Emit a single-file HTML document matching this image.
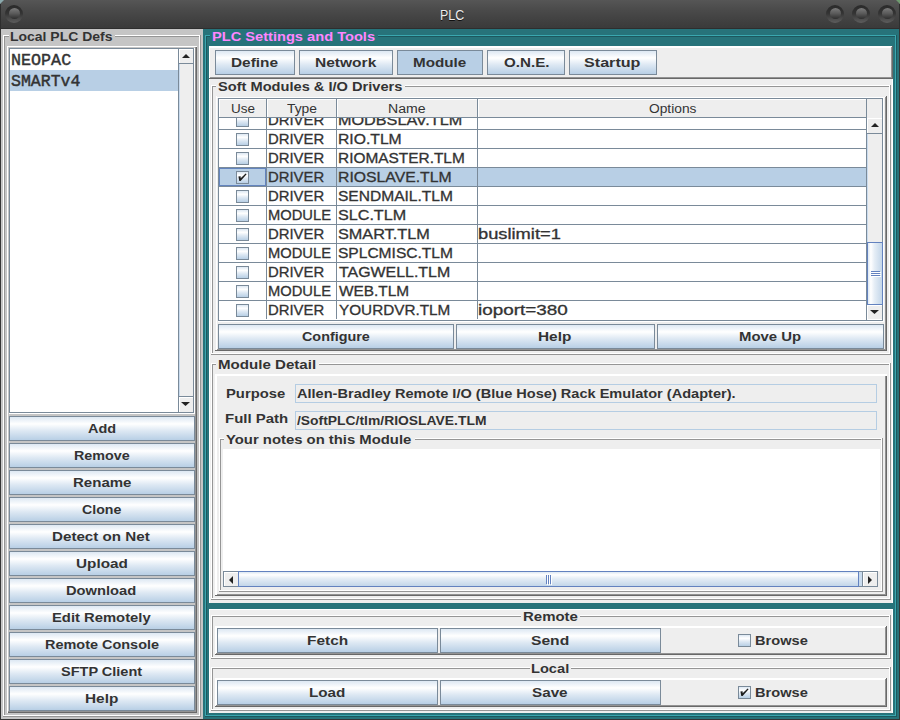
<!DOCTYPE html>
<html><head><meta charset="utf-8">
<style>
*{margin:0;padding:0;box-sizing:border-box}
html,body{width:900px;height:720px;overflow:hidden;background:#353535;font-family:"Liberation Sans",sans-serif;color:#333}
div{position:absolute}
.t{white-space:nowrap}
</style></head><body>
<div style="left:0px;top:0px;width:900px;height:29px;background:linear-gradient(#565656 0%,#4a4a4a 35%,#3e3e3e 80%,#3a3a3a 100%)"></div>
<div style="left:0px;top:28px;width:900px;height:1px;background:#2e2e2e"></div>
<div style="left:0px;top:0px;width:4px;height:4px;background:#8aa9ad;clip-path:polygon(0 0,100% 0,0 100%)"></div>
<div style="left:0px;top:4px;width:1px;height:25px;background:#2e2e2e"></div>
<div style="left:899px;top:4px;width:1px;height:25px;background:#2e2e2e"></div>
<div style="left:896px;top:0px;width:4px;height:4px;background:#6f9a6f;clip-path:polygon(0 0,100% 0,100% 100%)"></div>
<div style="left:5px;top:5px;width:18px;height:18px;border-radius:50%;background:linear-gradient(#2a2a2a,#333 45%,#5e5e5e)"></div>
<div style="left:8.5px;top:8.2px;width:11px;height:11px;border-radius:50%;background:linear-gradient(#7c7c7c,#5a5a5a 50%,#2e2e2e)"></div>
<div style="left:826px;top:5px;width:18px;height:18px;border-radius:50%;background:linear-gradient(#2a2a2a,#333 45%,#5e5e5e)"></div>
<div style="left:829.5px;top:8.2px;width:11px;height:11px;border-radius:50%;background:linear-gradient(#7c7c7c,#5a5a5a 50%,#2e2e2e)"></div>
<div style="left:852px;top:5px;width:18px;height:18px;border-radius:50%;background:linear-gradient(#2a2a2a,#333 45%,#5e5e5e)"></div>
<div style="left:855.5px;top:8.2px;width:11px;height:11px;border-radius:50%;background:linear-gradient(#7c7c7c,#5a5a5a 50%,#2e2e2e)"></div>
<div style="left:878px;top:5px;width:18px;height:18px;border-radius:50%;background:linear-gradient(#2a2a2a,#333 45%,#5e5e5e)"></div>
<div style="left:881.5px;top:8.2px;width:11px;height:11px;border-radius:50%;background:linear-gradient(#7c7c7c,#5a5a5a 50%,#2e2e2e)"></div>
<div style="left:1px;top:29px;width:202px;height:690px;background:#c5c5c5"></div>
<div style="left:3px;top:35px;width:197px;height:1px;background:#ffffff"></div>
<div style="left:3px;top:35px;width:1px;height:681px;background:#ffffff"></div>
<div style="left:199px;top:35px;width:1px;height:681px;background:#ffffff"></div>
<div style="left:3px;top:715px;width:197px;height:1px;background:#ffffff"></div>
<div style="left:4px;top:36px;width:1px;height:679px;background:#959595"></div>
<div style="left:4px;top:36px;width:195px;height:1px;background:#959595"></div>
<div style="left:3px;top:716px;width:198px;height:1px;background:#959595"></div>
<div style="left:200px;top:35px;width:1px;height:682px;background:#959595"></div>
<div style="left:9px;top:30px;width:106px;height:12px;background:#c5c5c5"></div>
<div style="left:195px;top:47px;width:1px;height:665px;background:#939393"></div>
<div style="left:8px;top:711px;width:188px;height:1px;background:#939393"></div>
<div style="left:196px;top:46px;width:1px;height:667px;background:#686868"></div>
<div style="left:7px;top:712px;width:190px;height:1px;background:#686868"></div>
<div style="left:7px;top:46px;width:1px;height:667px;background:#ffffff"></div>
<div style="left:7px;top:46px;width:190px;height:1px;background:#ffffff"></div>
<div style="left:9px;top:48px;width:185px;height:365px;border:1px solid #7a8a99;background:#fff"></div>
<div style="left:9px;top:413px;width:186px;height:1px;background:#ffffff"></div>
<div style="left:194px;top:48px;width:1px;height:366px;background:#ffffff"></div>
<div style="left:10px;top:70px;width:168px;height:21px;background:#b8cfe5"></div>
<div style="left:178px;top:49px;width:1px;height:363px;background:#7a8a99"></div>
<div style="left:179px;top:49px;width:14px;height:363px;background:#eeeeee"></div>
<div style="left:179px;top:64px;width:1px;height:332px;background:#c9dbee"></div>
<div style="left:179px;top:49px;width:14px;height:15px;background:#eeeeee;border-top:1px solid #fff;border-left:1px solid #fff"></div>
<div style="left:179px;top:63px;width:14px;height:1px;background:#7a8a99"></div>
<svg style="position:absolute;left:182px;top:54px" width="8" height="4"><polygon points="0,4 4.0,0 8,4" fill="#222"/></svg>
<div style="left:179px;top:396px;width:14px;height:1px;background:#7a8a99"></div>
<div style="left:179px;top:397px;width:14px;height:15px;background:#eeeeee;border-top:1px solid #fff;border-left:1px solid #fff"></div>
<svg style="position:absolute;left:181px;top:402px" width="9" height="4"><polygon points="0,0 9,0 4.5,4" fill="#222"/></svg>
<div style="left:178px;top:412px;width:16px;height:1px;background:#7a8a99"></div>
<div style="left:9px;top:416px;width:186px;height:25px;border:1px solid #7a8a99;background:linear-gradient(180deg,#dde8f3 0%,#ffffff 30%,#dde8f3 60%,#b8cfe5 100%)"></div>
<div style="left:9px;top:443px;width:186px;height:25px;border:1px solid #7a8a99;background:linear-gradient(180deg,#dde8f3 0%,#ffffff 30%,#dde8f3 60%,#b8cfe5 100%)"></div>
<div style="left:9px;top:470px;width:186px;height:25px;border:1px solid #7a8a99;background:linear-gradient(180deg,#dde8f3 0%,#ffffff 30%,#dde8f3 60%,#b8cfe5 100%)"></div>
<div style="left:9px;top:497px;width:186px;height:25px;border:1px solid #7a8a99;background:linear-gradient(180deg,#dde8f3 0%,#ffffff 30%,#dde8f3 60%,#b8cfe5 100%)"></div>
<div style="left:9px;top:524px;width:186px;height:25px;border:1px solid #7a8a99;background:linear-gradient(180deg,#dde8f3 0%,#ffffff 30%,#dde8f3 60%,#b8cfe5 100%)"></div>
<div style="left:9px;top:551px;width:186px;height:25px;border:1px solid #7a8a99;background:linear-gradient(180deg,#dde8f3 0%,#ffffff 30%,#dde8f3 60%,#b8cfe5 100%)"></div>
<div style="left:9px;top:578px;width:186px;height:25px;border:1px solid #7a8a99;background:linear-gradient(180deg,#dde8f3 0%,#ffffff 30%,#dde8f3 60%,#b8cfe5 100%)"></div>
<div style="left:9px;top:605px;width:186px;height:25px;border:1px solid #7a8a99;background:linear-gradient(180deg,#dde8f3 0%,#ffffff 30%,#dde8f3 60%,#b8cfe5 100%)"></div>
<div style="left:9px;top:632px;width:186px;height:25px;border:1px solid #7a8a99;background:linear-gradient(180deg,#dde8f3 0%,#ffffff 30%,#dde8f3 60%,#b8cfe5 100%)"></div>
<div style="left:9px;top:659px;width:186px;height:25px;border:1px solid #7a8a99;background:linear-gradient(180deg,#dde8f3 0%,#ffffff 30%,#dde8f3 60%,#b8cfe5 100%)"></div>
<div style="left:9px;top:686px;width:186px;height:25px;border:1px solid #7a8a99;background:linear-gradient(180deg,#dde8f3 0%,#ffffff 30%,#dde8f3 60%,#b8cfe5 100%)"></div>
<div style="left:203px;top:29px;width:696px;height:690px;background:#27737a"></div>
<div style="left:205px;top:35px;width:691px;height:1px;background:#3aa7af"></div>
<div style="left:205px;top:35px;width:1px;height:681px;background:#3aa7af"></div>
<div style="left:895px;top:35px;width:1px;height:681px;background:#3aa7af"></div>
<div style="left:205px;top:715px;width:691px;height:1px;background:#3aa7af"></div>
<div style="left:206px;top:36px;width:1px;height:679px;background:#1c585e"></div>
<div style="left:206px;top:36px;width:689px;height:1px;background:#1c585e"></div>
<div style="left:205px;top:716px;width:692px;height:1px;background:#1c585e"></div>
<div style="left:896px;top:35px;width:1px;height:682px;background:#1c585e"></div>
<div style="left:210px;top:30px;width:168px;height:13px;background:#27737a"></div>
<div style="left:209px;top:46px;width:684px;height:557px;background:#eeeeee"></div>
<div style="left:209px;top:46px;width:1px;height:557px;background:#ffffff"></div>
<div style="left:209px;top:46px;width:684px;height:1px;background:#ffffff"></div>
<div style="left:892px;top:46px;width:1px;height:557px;background:#ffffff"></div>
<div style="left:209px;top:47px;width:684px;height:1px;background:#ffffff"></div>
<div style="left:891px;top:47px;width:1px;height:31px;background:#939393"></div>
<div style="left:210px;top:77px;width:682px;height:1px;background:#939393"></div>
<div style="left:892px;top:46px;width:1px;height:33px;background:#686868"></div>
<div style="left:209px;top:78px;width:684px;height:1px;background:#686868"></div>
<div style="left:215px;top:50px;width:80px;height:25px;border:1px solid #7a8a99;background:linear-gradient(180deg,#dde8f3 0%,#ffffff 30%,#dde8f3 60%,#b8cfe5 100%)"></div>
<div style="left:299px;top:50px;width:94px;height:25px;border:1px solid #7a8a99;background:linear-gradient(180deg,#dde8f3 0%,#ffffff 30%,#dde8f3 60%,#b8cfe5 100%)"></div>
<div style="left:397px;top:50px;width:86px;height:25px;border:1px solid #7a8a99;background:#b8cfe5"></div>
<div style="left:487px;top:50px;width:78px;height:25px;border:1px solid #7a8a99;background:linear-gradient(180deg,#dde8f3 0%,#ffffff 30%,#dde8f3 60%,#b8cfe5 100%)"></div>
<div style="left:569px;top:50px;width:88px;height:25px;border:1px solid #7a8a99;background:linear-gradient(180deg,#dde8f3 0%,#ffffff 30%,#dde8f3 60%,#b8cfe5 100%)"></div>
<div style="left:211px;top:85px;width:679px;height:1px;background:#ffffff"></div>
<div style="left:211px;top:85px;width:1px;height:269px;background:#ffffff"></div>
<div style="left:889px;top:85px;width:1px;height:269px;background:#ffffff"></div>
<div style="left:211px;top:353px;width:679px;height:1px;background:#ffffff"></div>
<div style="left:212px;top:86px;width:1px;height:267px;background:#959595"></div>
<div style="left:212px;top:86px;width:677px;height:1px;background:#959595"></div>
<div style="left:211px;top:354px;width:680px;height:1px;background:#959595"></div>
<div style="left:890px;top:85px;width:1px;height:270px;background:#959595"></div>
<div style="left:216px;top:80px;width:189px;height:12px;background:#eeeeee"></div>
<div style="left:885px;top:97px;width:1px;height:253px;background:#939393"></div>
<div style="left:216px;top:349px;width:670px;height:1px;background:#939393"></div>
<div style="left:886px;top:96px;width:1px;height:255px;background:#686868"></div>
<div style="left:215px;top:350px;width:672px;height:1px;background:#686868"></div>
<div style="left:216px;top:96px;width:1px;height:254px;background:#ffffff"></div>
<div style="left:216px;top:97px;width:669px;height:1px;background:#ffffff"></div>
<div style="left:218px;top:98px;width:665px;height:223px;border:1px solid #7a8a99;background:#fff"></div>
<div style="left:218px;top:321px;width:666px;height:1px;background:#ffffff"></div>
<div style="left:883px;top:98px;width:1px;height:224px;background:#ffffff"></div>
<div style="left:219px;top:99px;width:648px;height:18px;background:#eeeeee"></div>
<div style="left:219px;top:117px;width:648px;height:1px;background:#7a8a99"></div>
<div style="left:219px;top:99px;width:648px;height:1px;background:#ffffff"></div>
<div style="left:266px;top:99px;width:1px;height:18px;background:#7a8a99"></div>
<div style="left:267px;top:99px;width:1px;height:18px;background:#ffffff"></div>
<div style="left:336px;top:99px;width:1px;height:18px;background:#7a8a99"></div>
<div style="left:337px;top:99px;width:1px;height:18px;background:#ffffff"></div>
<div style="left:477px;top:99px;width:1px;height:18px;background:#7a8a99"></div>
<div style="left:478px;top:99px;width:1px;height:18px;background:#ffffff"></div>
<div style="left:219px;top:99px;width:1px;height:18px;background:#ffffff"></div>
<div style="left:867px;top:99px;width:15px;height:19px;background:#eeeeee"></div>
<div style="left:866px;top:99px;width:1px;height:221px;background:#7a8a99"></div>
<div style="left:219px;top:118px;width:647px;height:201px;overflow:hidden">
<div style="left:0;top:11px;width:647px;height:1px;background:#7a8a99"></div>
<div style="left:47px;top:-8px;width:1px;height:20px;background:#7a8a99"></div>
<div style="left:117px;top:-8px;width:1px;height:20px;background:#7a8a99"></div>
<div style="left:258px;top:-8px;width:1px;height:20px;background:#7a8a99"></div>
<div style="left:17px;top:-4px;width:13px;height:13px;border:1px solid #7a8a99;background:linear-gradient(#dde8f3 0%,#ffffff 30%,#dde8f3 60%,#b8cfe5 100%)"></div>
<div style="left:0;top:30px;width:647px;height:1px;background:#7a8a99"></div>
<div style="left:47px;top:11px;width:1px;height:20px;background:#7a8a99"></div>
<div style="left:117px;top:11px;width:1px;height:20px;background:#7a8a99"></div>
<div style="left:258px;top:11px;width:1px;height:20px;background:#7a8a99"></div>
<div style="left:17px;top:15px;width:13px;height:13px;border:1px solid #7a8a99;background:linear-gradient(#dde8f3 0%,#ffffff 30%,#dde8f3 60%,#b8cfe5 100%)"></div>
<div style="left:0;top:49px;width:647px;height:1px;background:#7a8a99"></div>
<div style="left:47px;top:30px;width:1px;height:20px;background:#7a8a99"></div>
<div style="left:117px;top:30px;width:1px;height:20px;background:#7a8a99"></div>
<div style="left:258px;top:30px;width:1px;height:20px;background:#7a8a99"></div>
<div style="left:17px;top:34px;width:13px;height:13px;border:1px solid #7a8a99;background:linear-gradient(#dde8f3 0%,#ffffff 30%,#dde8f3 60%,#b8cfe5 100%)"></div>
<div style="left:0;top:50px;width:647px;height:18px;background:#b8cfe5"></div>
<div style="left:0;top:68px;width:647px;height:1px;background:#7a8a99"></div>
<div style="left:47px;top:49px;width:1px;height:20px;background:#7a8a99"></div>
<div style="left:117px;top:49px;width:1px;height:20px;background:#7a8a99"></div>
<div style="left:258px;top:49px;width:1px;height:20px;background:#7a8a99"></div>
<div style="left:17px;top:53px;width:13px;height:13px;border:1px solid #7a8a99;background:linear-gradient(#dde8f3 0%,#ffffff 30%,#dde8f3 60%,#b8cfe5 100%)"></div>
<div style="left:0;top:50px;width:47px;height:18px;border:1px solid #6384be"></div>
<svg style="position:absolute;left:17px;top:53px" width="13" height="13" viewBox="0 0 13 13"><polygon points="2.4,5.4 4.6,5.2 4.7,7.2 9.6,2.4 10.6,3.3 4.6,9.9 3.3,9.9" fill="#1e1e1e"/></svg>
<div style="left:0;top:87px;width:647px;height:1px;background:#7a8a99"></div>
<div style="left:47px;top:68px;width:1px;height:20px;background:#7a8a99"></div>
<div style="left:117px;top:68px;width:1px;height:20px;background:#7a8a99"></div>
<div style="left:258px;top:68px;width:1px;height:20px;background:#7a8a99"></div>
<div style="left:17px;top:72px;width:13px;height:13px;border:1px solid #7a8a99;background:linear-gradient(#dde8f3 0%,#ffffff 30%,#dde8f3 60%,#b8cfe5 100%)"></div>
<div style="left:0;top:106px;width:647px;height:1px;background:#7a8a99"></div>
<div style="left:47px;top:87px;width:1px;height:20px;background:#7a8a99"></div>
<div style="left:117px;top:87px;width:1px;height:20px;background:#7a8a99"></div>
<div style="left:258px;top:87px;width:1px;height:20px;background:#7a8a99"></div>
<div style="left:17px;top:91px;width:13px;height:13px;border:1px solid #7a8a99;background:linear-gradient(#dde8f3 0%,#ffffff 30%,#dde8f3 60%,#b8cfe5 100%)"></div>
<div style="left:0;top:125px;width:647px;height:1px;background:#7a8a99"></div>
<div style="left:47px;top:106px;width:1px;height:20px;background:#7a8a99"></div>
<div style="left:117px;top:106px;width:1px;height:20px;background:#7a8a99"></div>
<div style="left:258px;top:106px;width:1px;height:20px;background:#7a8a99"></div>
<div style="left:17px;top:110px;width:13px;height:13px;border:1px solid #7a8a99;background:linear-gradient(#dde8f3 0%,#ffffff 30%,#dde8f3 60%,#b8cfe5 100%)"></div>
<div style="left:0;top:144px;width:647px;height:1px;background:#7a8a99"></div>
<div style="left:47px;top:125px;width:1px;height:20px;background:#7a8a99"></div>
<div style="left:117px;top:125px;width:1px;height:20px;background:#7a8a99"></div>
<div style="left:258px;top:125px;width:1px;height:20px;background:#7a8a99"></div>
<div style="left:17px;top:129px;width:13px;height:13px;border:1px solid #7a8a99;background:linear-gradient(#dde8f3 0%,#ffffff 30%,#dde8f3 60%,#b8cfe5 100%)"></div>
<div style="left:0;top:163px;width:647px;height:1px;background:#7a8a99"></div>
<div style="left:47px;top:144px;width:1px;height:20px;background:#7a8a99"></div>
<div style="left:117px;top:144px;width:1px;height:20px;background:#7a8a99"></div>
<div style="left:258px;top:144px;width:1px;height:20px;background:#7a8a99"></div>
<div style="left:17px;top:148px;width:13px;height:13px;border:1px solid #7a8a99;background:linear-gradient(#dde8f3 0%,#ffffff 30%,#dde8f3 60%,#b8cfe5 100%)"></div>
<div style="left:0;top:182px;width:647px;height:1px;background:#7a8a99"></div>
<div style="left:47px;top:163px;width:1px;height:20px;background:#7a8a99"></div>
<div style="left:117px;top:163px;width:1px;height:20px;background:#7a8a99"></div>
<div style="left:258px;top:163px;width:1px;height:20px;background:#7a8a99"></div>
<div style="left:17px;top:167px;width:13px;height:13px;border:1px solid #7a8a99;background:linear-gradient(#dde8f3 0%,#ffffff 30%,#dde8f3 60%,#b8cfe5 100%)"></div>
<div style="left:0;top:201px;width:647px;height:1px;background:#7a8a99"></div>
<div style="left:47px;top:182px;width:1px;height:20px;background:#7a8a99"></div>
<div style="left:117px;top:182px;width:1px;height:20px;background:#7a8a99"></div>
<div style="left:258px;top:182px;width:1px;height:20px;background:#7a8a99"></div>
<div style="left:17px;top:186px;width:13px;height:13px;border:1px solid #7a8a99;background:linear-gradient(#dde8f3 0%,#ffffff 30%,#dde8f3 60%,#b8cfe5 100%)"></div>
<div class="t" style="left:48.94px;top:-5px;font-family:'Liberation Sans';font-weight:normal;font-size:14px;line-height:14px;transform:scaleX(1.0627);transform-origin:0 0;color:#333;-webkit-text-stroke:0.3px #333;">DRIVER</div>
<div class="t" style="left:118.84px;top:-5px;font-family:'Liberation Sans';font-weight:normal;font-size:14px;line-height:14px;transform:scaleX(1.1575);transform-origin:0 0;color:#333;-webkit-text-stroke:0.3px #333;">MODBSLAV.TLM</div>
<div class="t" style="left:48.94px;top:14px;font-family:'Liberation Sans';font-weight:normal;font-size:14px;line-height:14px;transform:scaleX(1.0627);transform-origin:0 0;color:#333;-webkit-text-stroke:0.3px #333;">DRIVER</div>
<div class="t" style="left:118.88px;top:14px;font-family:'Liberation Sans';font-weight:normal;font-size:14px;line-height:14px;transform:scaleX(1.1218);transform-origin:0 0;color:#333;-webkit-text-stroke:0.3px #333;">RIO.TLM</div>
<div class="t" style="left:48.94px;top:33px;font-family:'Liberation Sans';font-weight:normal;font-size:14px;line-height:14px;transform:scaleX(1.0627);transform-origin:0 0;color:#333;-webkit-text-stroke:0.3px #333;">DRIVER</div>
<div class="t" style="left:118.90px;top:33px;font-family:'Liberation Sans';font-weight:normal;font-size:14px;line-height:14px;transform:scaleX(1.1009);transform-origin:0 0;color:#333;-webkit-text-stroke:0.3px #333;">RIOMASTER.TLM</div>
<div class="t" style="left:48.94px;top:52px;font-family:'Liberation Sans';font-weight:normal;font-size:14px;line-height:14px;transform:scaleX(1.0627);transform-origin:0 0;color:#333;-webkit-text-stroke:0.3px #333;">DRIVER</div>
<div class="t" style="left:118.87px;top:52px;font-family:'Liberation Sans';font-weight:normal;font-size:14px;line-height:14px;transform:scaleX(1.1263);transform-origin:0 0;color:#333;-webkit-text-stroke:0.3px #333;">RIOSLAVE.TLM</div>
<div class="t" style="left:48.94px;top:71px;font-family:'Liberation Sans';font-weight:normal;font-size:14px;line-height:14px;transform:scaleX(1.0627);transform-origin:0 0;color:#333;-webkit-text-stroke:0.3px #333;">DRIVER</div>
<div class="t" style="left:118.89px;top:71px;font-family:'Liberation Sans';font-weight:normal;font-size:14px;line-height:14px;transform:scaleX(1.1108);transform-origin:0 0;color:#333;-webkit-text-stroke:0.3px #333;">SENDMAIL.TLM</div>
<div class="t" style="left:48.95px;top:90px;font-family:'Liberation Sans';font-weight:normal;font-size:14px;line-height:14px;transform:scaleX(1.0517);transform-origin:0 0;color:#333;-webkit-text-stroke:0.3px #333;">MODULE</div>
<div class="t" style="left:118.85px;top:90px;font-family:'Liberation Sans';font-weight:normal;font-size:14px;line-height:14px;transform:scaleX(1.1526);transform-origin:0 0;color:#333;-webkit-text-stroke:0.3px #333;">SLC.TLM</div>
<div class="t" style="left:48.94px;top:109px;font-family:'Liberation Sans';font-weight:normal;font-size:14px;line-height:14px;transform:scaleX(1.0627);transform-origin:0 0;color:#333;-webkit-text-stroke:0.3px #333;">DRIVER</div>
<div class="t" style="left:118.84px;top:109px;font-family:'Liberation Sans';font-weight:normal;font-size:14px;line-height:14px;transform:scaleX(1.1597);transform-origin:0 0;color:#333;-webkit-text-stroke:0.3px #333;">SMART.TLM</div>
<div class="t" style="left:258.69px;top:109px;font-family:'Liberation Sans';font-weight:normal;font-size:14px;line-height:14px;transform:scaleX(1.3065);transform-origin:0 0;color:#333;-webkit-text-stroke:0.3px #333;">buslimit=1</div>
<div class="t" style="left:48.95px;top:128px;font-family:'Liberation Sans';font-weight:normal;font-size:14px;line-height:14px;transform:scaleX(1.0517);transform-origin:0 0;color:#333;-webkit-text-stroke:0.3px #333;">MODULE</div>
<div class="t" style="left:118.89px;top:128px;font-family:'Liberation Sans';font-weight:normal;font-size:14px;line-height:14px;transform:scaleX(1.1108);transform-origin:0 0;color:#333;-webkit-text-stroke:0.3px #333;">SPLCMISC.TLM</div>
<div class="t" style="left:48.94px;top:147px;font-family:'Liberation Sans';font-weight:normal;font-size:14px;line-height:14px;transform:scaleX(1.0627);transform-origin:0 0;color:#333;-webkit-text-stroke:0.3px #333;">DRIVER</div>
<div class="t" style="left:120.00px;top:147px;font-family:'Liberation Sans';font-weight:normal;font-size:14px;line-height:14px;transform:scaleX(1.1371);transform-origin:0 0;color:#333;-webkit-text-stroke:0.3px #333;">TAGWELL.TLM</div>
<div class="t" style="left:48.95px;top:166px;font-family:'Liberation Sans';font-weight:normal;font-size:14px;line-height:14px;transform:scaleX(1.0517);transform-origin:0 0;color:#333;-webkit-text-stroke:0.3px #333;">MODULE</div>
<div class="t" style="left:120.00px;top:166px;font-family:'Liberation Sans';font-weight:normal;font-size:14px;line-height:14px;transform:scaleX(1.1000);transform-origin:0 0;color:#333;-webkit-text-stroke:0.3px #333;">WEB.TLM</div>
<div class="t" style="left:48.94px;top:185px;font-family:'Liberation Sans';font-weight:normal;font-size:14px;line-height:14px;transform:scaleX(1.0627);transform-origin:0 0;color:#333;-webkit-text-stroke:0.3px #333;">DRIVER</div>
<div class="t" style="left:120.00px;top:185px;font-family:'Liberation Sans';font-weight:normal;font-size:14px;line-height:14px;transform:scaleX(1.0921);transform-origin:0 0;color:#333;-webkit-text-stroke:0.3px #333;">YOURDVR.TLM</div>
<div class="t" style="left:258.65px;top:185px;font-family:'Liberation Sans';font-weight:normal;font-size:14px;line-height:14px;transform:scaleX(1.3492);transform-origin:0 0;color:#333;-webkit-text-stroke:0.3px #333;">ioport=380</div>
</div>
<div style="left:867px;top:118px;width:15px;height:201px;background:#eeeeee"></div>
<div style="left:867px;top:134px;width:1px;height:108px;background:#c9dbee"></div>
<div style="left:867px;top:118px;width:15px;height:15px;background:#eeeeee;border-top:1px solid #fff;border-left:1px solid #fff"></div>
<div style="left:867px;top:133px;width:15px;height:1px;background:#7a8a99"></div>
<svg style="position:absolute;left:871px;top:123px" width="8" height="4"><polygon points="0,4 4.0,0 8,4" fill="#222"/></svg>
<div style="left:867px;top:242px;width:16px;height:63px;border:1px solid #6382bf;background:linear-gradient(90deg,#dde8f3 0%,#ffffff 20%,#e6eef6 45%,#c3d6e9 100%)"></div>
<div style="left:871px;top:271px;width:9px;height:1px;background:#6382bf"></div>
<div style="left:872px;top:272px;width:9px;height:1px;background:#ffffff"></div>
<div style="left:871px;top:273px;width:9px;height:1px;background:#6382bf"></div>
<div style="left:872px;top:274px;width:9px;height:1px;background:#ffffff"></div>
<div style="left:871px;top:275px;width:9px;height:1px;background:#6382bf"></div>
<div style="left:872px;top:276px;width:9px;height:1px;background:#ffffff"></div>
<div style="left:867px;top:305px;width:15px;height:14px;background:#eeeeee;border-top:1px solid #fff;border-left:1px solid #fff"></div>
<svg style="position:absolute;left:870px;top:310px" width="9" height="4"><polygon points="0,0 9,0 4.5,4" fill="#222"/></svg>
<div style="left:218px;top:320px;width:665px;height:1px;background:#7a8a99"></div>
<div style="left:218px;top:324px;width:236px;height:25px;border:1px solid #7a8a99;background:linear-gradient(180deg,#dde8f3 0%,#ffffff 30%,#dde8f3 60%,#b8cfe5 100%)"></div>
<div style="left:456px;top:324px;width:199px;height:25px;border:1px solid #7a8a99;background:linear-gradient(180deg,#dde8f3 0%,#ffffff 30%,#dde8f3 60%,#b8cfe5 100%)"></div>
<div style="left:657px;top:324px;width:227px;height:25px;border:1px solid #7a8a99;background:linear-gradient(180deg,#dde8f3 0%,#ffffff 30%,#dde8f3 60%,#b8cfe5 100%)"></div>
<div style="left:211px;top:363px;width:679px;height:1px;background:#ffffff"></div>
<div style="left:211px;top:363px;width:1px;height:236px;background:#ffffff"></div>
<div style="left:889px;top:363px;width:1px;height:236px;background:#ffffff"></div>
<div style="left:211px;top:598px;width:679px;height:1px;background:#ffffff"></div>
<div style="left:212px;top:364px;width:1px;height:234px;background:#959595"></div>
<div style="left:212px;top:364px;width:677px;height:1px;background:#959595"></div>
<div style="left:211px;top:599px;width:680px;height:1px;background:#959595"></div>
<div style="left:890px;top:363px;width:1px;height:237px;background:#959595"></div>
<div style="left:216px;top:358px;width:103px;height:12px;background:#eeeeee"></div>
<div style="left:885px;top:375px;width:1px;height:220px;background:#939393"></div>
<div style="left:216px;top:594px;width:670px;height:1px;background:#939393"></div>
<div style="left:886px;top:374px;width:1px;height:222px;background:#686868"></div>
<div style="left:215px;top:595px;width:672px;height:1px;background:#686868"></div>
<div style="left:215px;top:375px;width:1px;height:220px;background:#ffffff"></div>
<div style="left:216px;top:375px;width:1px;height:220px;background:#ffffff"></div>
<div style="left:215px;top:375px;width:672px;height:1px;background:#ffffff"></div>
<div style="left:215px;top:374px;width:672px;height:1px;background:#ffffff"></div>
<div style="left:295px;top:384px;width:582px;height:19px;border:1px solid #b5cde3;background:#eeeeee"></div>
<div style="left:295px;top:411px;width:582px;height:19px;border:1px solid #b5cde3;background:#eeeeee"></div>
<div style="left:219px;top:438px;width:663px;height:1px;background:#ffffff"></div>
<div style="left:219px;top:438px;width:1px;height:153px;background:#ffffff"></div>
<div style="left:881px;top:438px;width:1px;height:153px;background:#ffffff"></div>
<div style="left:219px;top:590px;width:663px;height:1px;background:#ffffff"></div>
<div style="left:220px;top:439px;width:1px;height:151px;background:#959595"></div>
<div style="left:220px;top:439px;width:661px;height:1px;background:#959595"></div>
<div style="left:219px;top:591px;width:664px;height:1px;background:#959595"></div>
<div style="left:882px;top:438px;width:1px;height:154px;background:#959595"></div>
<div style="left:224px;top:432px;width:191px;height:12px;background:#eeeeee"></div>
<div style="left:223px;top:449px;width:657px;height:122px;background:#fff"></div>
<div style="left:223px;top:571px;width:655px;height:1px;background:#7a8a99"></div>
<div style="left:223px;top:586px;width:655px;height:1px;background:#7a8a99"></div>
<div style="left:223px;top:571px;width:1px;height:16px;background:#7a8a99"></div>
<div style="left:877px;top:571px;width:1px;height:16px;background:#7a8a99"></div>
<div style="left:224px;top:572px;width:14px;height:14px;background:#eeeeee;border-top:1px solid #fff;border-left:1px solid #fff"></div>
<div style="left:238px;top:572px;width:1px;height:14px;background:#7a8a99"></div>
<svg style="position:absolute;left:229px;top:576px" width="4" height="8"><polygon points="4,0 4,8 0,4.0" fill="#222"/></svg>
<div style="left:238px;top:571px;width:621px;height:16px;border:1px solid #6382bf;background:linear-gradient(180deg,#dde8f3 0%,#ffffff 20%,#e6eef6 45%,#c3d6e9 100%)"></div>
<div style="left:859px;top:572px;width:3px;height:14px;background:#c9dbee"></div>
<div style="left:546px;top:575px;width:1px;height:9px;background:#6382bf"></div>
<div style="left:547px;top:576px;width:1px;height:9px;background:#ffffff"></div>
<div style="left:548px;top:575px;width:1px;height:9px;background:#6382bf"></div>
<div style="left:549px;top:576px;width:1px;height:9px;background:#ffffff"></div>
<div style="left:550px;top:575px;width:1px;height:9px;background:#6382bf"></div>
<div style="left:551px;top:576px;width:1px;height:9px;background:#ffffff"></div>
<div style="left:862px;top:572px;width:1px;height:14px;background:#7a8a99"></div>
<div style="left:863px;top:572px;width:14px;height:14px;background:#eeeeee;border-top:1px solid #fff;border-left:1px solid #fff"></div>
<svg style="position:absolute;left:868px;top:576px" width="4" height="8"><polygon points="0,0 0,8 4,4.0" fill="#222"/></svg>
<div style="left:209px;top:609px;width:684px;height:104px;background:#eeeeee"></div>
<div style="left:209px;top:609px;width:1px;height:104px;background:#ffffff"></div>
<div style="left:209px;top:609px;width:684px;height:1px;background:#ffffff"></div>
<div style="left:892px;top:609px;width:1px;height:104px;background:#ffffff"></div>
<div style="left:211px;top:615px;width:679px;height:1px;background:#ffffff"></div>
<div style="left:211px;top:615px;width:1px;height:43px;background:#ffffff"></div>
<div style="left:889px;top:615px;width:1px;height:43px;background:#ffffff"></div>
<div style="left:211px;top:657px;width:679px;height:1px;background:#ffffff"></div>
<div style="left:212px;top:616px;width:1px;height:41px;background:#959595"></div>
<div style="left:212px;top:616px;width:677px;height:1px;background:#959595"></div>
<div style="left:211px;top:658px;width:680px;height:1px;background:#959595"></div>
<div style="left:890px;top:615px;width:1px;height:44px;background:#959595"></div>
<div style="left:521px;top:610px;width:59px;height:12px;background:#eeeeee"></div>
<div style="left:215px;top:626px;width:672px;height:1px;background:#ffffff"></div>
<div style="left:215px;top:627px;width:672px;height:1px;background:#ffffff"></div>
<div style="left:215px;top:626px;width:1px;height:28px;background:#ffffff"></div>
<div style="left:216px;top:626px;width:1px;height:28px;background:#ffffff"></div>
<div style="left:885px;top:627px;width:1px;height:27px;background:#939393"></div>
<div style="left:216px;top:653px;width:670px;height:1px;background:#939393"></div>
<div style="left:886px;top:626px;width:1px;height:29px;background:#686868"></div>
<div style="left:215px;top:654px;width:672px;height:1px;background:#686868"></div>
<div style="left:217px;top:628px;width:221px;height:25px;border:1px solid #7a8a99;background:linear-gradient(180deg,#dde8f3 0%,#ffffff 30%,#dde8f3 60%,#b8cfe5 100%)"></div>
<div style="left:440px;top:628px;width:221px;height:25px;border:1px solid #7a8a99;background:linear-gradient(180deg,#dde8f3 0%,#ffffff 30%,#dde8f3 60%,#b8cfe5 100%)"></div>
<div style="left:738px;top:634px;width:13px;height:13px;border:1px solid #7a8a99;background:linear-gradient(#dde8f3 0%,#ffffff 30%,#dde8f3 60%,#b8cfe5 100%)"></div>
<div style="left:211px;top:667px;width:679px;height:1px;background:#ffffff"></div>
<div style="left:211px;top:667px;width:1px;height:43px;background:#ffffff"></div>
<div style="left:889px;top:667px;width:1px;height:43px;background:#ffffff"></div>
<div style="left:211px;top:709px;width:679px;height:1px;background:#ffffff"></div>
<div style="left:212px;top:668px;width:1px;height:41px;background:#959595"></div>
<div style="left:212px;top:668px;width:677px;height:1px;background:#959595"></div>
<div style="left:211px;top:710px;width:680px;height:1px;background:#959595"></div>
<div style="left:890px;top:667px;width:1px;height:44px;background:#959595"></div>
<div style="left:530px;top:662px;width:41px;height:12px;background:#eeeeee"></div>
<div style="left:215px;top:678px;width:672px;height:1px;background:#ffffff"></div>
<div style="left:215px;top:679px;width:672px;height:1px;background:#ffffff"></div>
<div style="left:215px;top:678px;width:1px;height:28px;background:#ffffff"></div>
<div style="left:216px;top:678px;width:1px;height:28px;background:#ffffff"></div>
<div style="left:885px;top:679px;width:1px;height:27px;background:#939393"></div>
<div style="left:216px;top:705px;width:670px;height:1px;background:#939393"></div>
<div style="left:886px;top:678px;width:1px;height:29px;background:#686868"></div>
<div style="left:215px;top:706px;width:672px;height:1px;background:#686868"></div>
<div style="left:217px;top:680px;width:221px;height:25px;border:1px solid #7a8a99;background:linear-gradient(180deg,#dde8f3 0%,#ffffff 30%,#dde8f3 60%,#b8cfe5 100%)"></div>
<div style="left:440px;top:680px;width:221px;height:25px;border:1px solid #7a8a99;background:linear-gradient(180deg,#dde8f3 0%,#ffffff 30%,#dde8f3 60%,#b8cfe5 100%)"></div>
<div style="left:738px;top:686px;width:13px;height:13px;border:1px solid #7a8a99;background:linear-gradient(#dde8f3 0%,#ffffff 30%,#dde8f3 60%,#b8cfe5 100%)"></div>
<svg style="position:absolute;left:738px;top:686px" width="13" height="13" viewBox="0 0 13 13"><polygon points="2.4,5.4 4.6,5.2 4.7,7.2 9.6,2.4 10.6,3.3 4.6,9.9 3.3,9.9" fill="#1e1e1e"/></svg>
<div class="t" style="left:439.62px;top:8px;font-family:'Liberation Sans';font-weight:normal;font-size:14px;line-height:14px;transform:scaleX(0.8846);transform-origin:0 0;color:#eeeeee;text-shadow:0 1px 0 #111;">PLC</div>
<div class="t" style="left:9.93px;top:30px;font-family:'Liberation Sans';font-weight:bold;font-size:13px;line-height:13px;transform:scaleX(1.0745);transform-origin:0 0;color:#333;">Local PLC Defs</div>
<div class="t" style="left:11.02px;top:52px;font-family:'Liberation Mono';font-weight:normal;font-size:17px;line-height:17px;transform:scaleX(0.9831);transform-origin:0 0;color:#333;-webkit-text-stroke:0.45px #333;">NEOPAC</div>
<div class="t" style="left:11.03px;top:73px;font-family:'Liberation Mono';font-weight:normal;font-size:17px;line-height:17px;transform:scaleX(0.9714);transform-origin:0 0;color:#333;-webkit-text-stroke:0.45px #333;">SMARTv4</div>
<div class="t" style="left:88.09px;top:422px;font-family:'Liberation Sans';font-weight:bold;font-size:13px;line-height:13px;transform:scaleX(1.1124);transform-origin:0 0;color:#333;">Add</div>
<div class="t" style="left:73.90px;top:449px;font-family:'Liberation Sans';font-weight:bold;font-size:13px;line-height:13px;transform:scaleX(1.1020);transform-origin:0 0;color:#333;">Remove</div>
<div class="t" style="left:72.52px;top:476px;font-family:'Liberation Sans';font-weight:bold;font-size:13px;line-height:13px;transform:scaleX(1.1561);transform-origin:0 0;color:#333;">Rename</div>
<div class="t" style="left:82.43px;top:503px;font-family:'Liberation Sans';font-weight:bold;font-size:13px;line-height:13px;transform:scaleX(1.0872);transform-origin:0 0;color:#333;">Clone</div>
<div class="t" style="left:52.42px;top:530px;font-family:'Liberation Sans';font-weight:bold;font-size:13px;line-height:13px;transform:scaleX(1.1665);transform-origin:0 0;color:#333;">Detect on Net</div>
<div class="t" style="left:76.10px;top:557px;font-family:'Liberation Sans';font-weight:bold;font-size:13px;line-height:13px;transform:scaleX(1.1771);transform-origin:0 0;color:#333;">Upload</div>
<div class="t" style="left:66.36px;top:584px;font-family:'Liberation Sans';font-weight:bold;font-size:13px;line-height:13px;transform:scaleX(1.1313);transform-origin:0 0;color:#333;">Download</div>
<div class="t" style="left:51.94px;top:611px;font-family:'Liberation Sans';font-weight:bold;font-size:13px;line-height:13px;transform:scaleX(1.1378);transform-origin:0 0;color:#333;">Edit Remotely</div>
<div class="t" style="left:44.75px;top:638px;font-family:'Liberation Sans';font-weight:bold;font-size:13px;line-height:13px;transform:scaleX(1.1116);transform-origin:0 0;color:#333;">Remote Console</div>
<div class="t" style="left:60.71px;top:665px;font-family:'Liberation Sans';font-weight:bold;font-size:13px;line-height:13px;transform:scaleX(1.1158);transform-origin:0 0;color:#333;">SFTP Client</div>
<div class="t" style="left:84.85px;top:692px;font-family:'Liberation Sans';font-weight:bold;font-size:13px;line-height:13px;transform:scaleX(1.1826);transform-origin:0 0;color:#333;">Help</div>
<div class="t" style="left:211.88px;top:30px;font-family:'Liberation Sans';font-weight:bold;font-size:13px;line-height:13px;transform:scaleX(1.1250);transform-origin:0 0;color:#ff86ff;">PLC Settings and Tools</div>
<div class="t" style="left:231.32px;top:56px;font-family:'Liberation Sans';font-weight:bold;font-size:13px;line-height:13px;transform:scaleX(1.1842);transform-origin:0 0;color:#333;">Define</div>
<div class="t" style="left:314.94px;top:56px;font-family:'Liberation Sans';font-weight:bold;font-size:13px;line-height:13px;transform:scaleX(1.1948);transform-origin:0 0;color:#333;">Network</div>
<div class="t" style="left:413.08px;top:56px;font-family:'Liberation Sans';font-weight:bold;font-size:13px;line-height:13px;transform:scaleX(1.1705);transform-origin:0 0;color:#333;">Module</div>
<div class="t" style="left:503.86px;top:56px;font-family:'Liberation Sans';font-weight:bold;font-size:13px;line-height:13px;transform:scaleX(1.1655);transform-origin:0 0;color:#333;">O.N.E.</div>
<div class="t" style="left:584.46px;top:56px;font-family:'Liberation Sans';font-weight:bold;font-size:13px;line-height:13px;transform:scaleX(1.2407);transform-origin:0 0;color:#333;">Startup</div>
<div class="t" style="left:217.88px;top:80px;font-family:'Liberation Sans';font-weight:bold;font-size:13px;line-height:13px;transform:scaleX(1.1248);transform-origin:0 0;color:#333;">Soft Modules &amp; I/O Drivers</div>
<div class="t" style="left:231.09px;top:103px;font-family:'Liberation Sans';font-weight:normal;font-size:12.5px;line-height:12.5px;transform:scaleX(1.0790);transform-origin:0 0;color:#333;">Use</div>
<div class="t" style="left:287.06px;top:103px;font-family:'Liberation Sans';font-weight:normal;font-size:12.5px;line-height:12.5px;transform:scaleX(1.1063);transform-origin:0 0;color:#333;">Type</div>
<div class="t" style="left:388.35px;top:103px;font-family:'Liberation Sans';font-weight:normal;font-size:12.5px;line-height:12.5px;transform:scaleX(1.1266);transform-origin:0 0;color:#333;">Name</div>
<div class="t" style="left:648.81px;top:103px;font-family:'Liberation Sans';font-weight:normal;font-size:12.5px;line-height:12.5px;transform:scaleX(1.1019);transform-origin:0 0;color:#333;">Options</div>
<div class="t" style="left:302.30px;top:330px;font-family:'Liberation Sans';font-weight:bold;font-size:13px;line-height:13px;transform:scaleX(1.1049);transform-origin:0 0;color:#333;">Configure</div>
<div class="t" style="left:538.35px;top:330px;font-family:'Liberation Sans';font-weight:bold;font-size:13px;line-height:13px;transform:scaleX(1.1826);transform-origin:0 0;color:#333;">Help</div>
<div class="t" style="left:738.97px;top:330px;font-family:'Liberation Sans';font-weight:bold;font-size:13px;line-height:13px;transform:scaleX(1.1466);transform-origin:0 0;color:#333;">Move Up</div>
<div class="t" style="left:217.84px;top:358px;font-family:'Liberation Sans';font-weight:bold;font-size:13px;line-height:13px;transform:scaleX(1.1614);transform-origin:0 0;color:#333;">Module Detail</div>
<div class="t" style="left:225.86px;top:387px;font-family:'Liberation Sans';font-weight:bold;font-size:13px;line-height:13px;transform:scaleX(1.1373);transform-origin:0 0;color:#333;">Purpose</div>
<div class="t" style="left:297.00px;top:387px;font-family:'Liberation Sans';font-weight:bold;font-size:13px;line-height:13px;transform:scaleX(1.1202);transform-origin:0 0;color:#333;">Allen-Bradley Remote I/O (Blue Hose) Rack Emulator (Adapter).</div>
<div class="t" style="left:224.85px;top:412px;font-family:'Liberation Sans';font-weight:bold;font-size:13px;line-height:13px;transform:scaleX(1.1509);transform-origin:0 0;color:#333;">Full Path</div>
<div class="t" style="left:297.00px;top:414px;font-family:'Liberation Sans';font-weight:bold;font-size:13px;line-height:13px;transform:scaleX(1.0678);transform-origin:0 0;color:#333;">/SoftPLC/tlm/RIOSLAVE.TLM</div>
<div class="t" style="left:226.00px;top:433px;font-family:'Liberation Sans';font-weight:bold;font-size:13px;line-height:13px;transform:scaleX(1.1420);transform-origin:0 0;color:#333;">Your notes on this Module</div>
<div class="t" style="left:523.35px;top:610px;font-family:'Liberation Sans';font-weight:bold;font-size:13px;line-height:13px;transform:scaleX(1.1522);transform-origin:0 0;color:#333;">Remote</div>
<div class="t" style="left:306.74px;top:634px;font-family:'Liberation Sans';font-weight:bold;font-size:13px;line-height:13px;transform:scaleX(1.1861);transform-origin:0 0;color:#333;">Fetch</div>
<div class="t" style="left:531.27px;top:634px;font-family:'Liberation Sans';font-weight:bold;font-size:13px;line-height:13px;transform:scaleX(1.2017);transform-origin:0 0;color:#333;">Send</div>
<div class="t" style="left:754.88px;top:634px;font-family:'Liberation Sans';font-weight:bold;font-size:13px;line-height:13px;transform:scaleX(1.1239);transform-origin:0 0;color:#333;">Browse</div>
<div class="t" style="left:531.27px;top:662px;font-family:'Liberation Sans';font-weight:bold;font-size:13px;line-height:13px;transform:scaleX(1.1250);transform-origin:0 0;color:#333;">Local</div>
<div class="t" style="left:309.33px;top:686px;font-family:'Liberation Sans';font-weight:bold;font-size:13px;line-height:13px;transform:scaleX(1.1721);transform-origin:0 0;color:#333;">Load</div>
<div class="t" style="left:532.33px;top:686px;font-family:'Liberation Sans';font-weight:bold;font-size:13px;line-height:13px;transform:scaleX(1.1721);transform-origin:0 0;color:#333;">Save</div>
<div class="t" style="left:754.88px;top:686px;font-family:'Liberation Sans';font-weight:bold;font-size:13px;line-height:13px;transform:scaleX(1.1239);transform-origin:0 0;color:#333;">Browse</div>
</body></html>
